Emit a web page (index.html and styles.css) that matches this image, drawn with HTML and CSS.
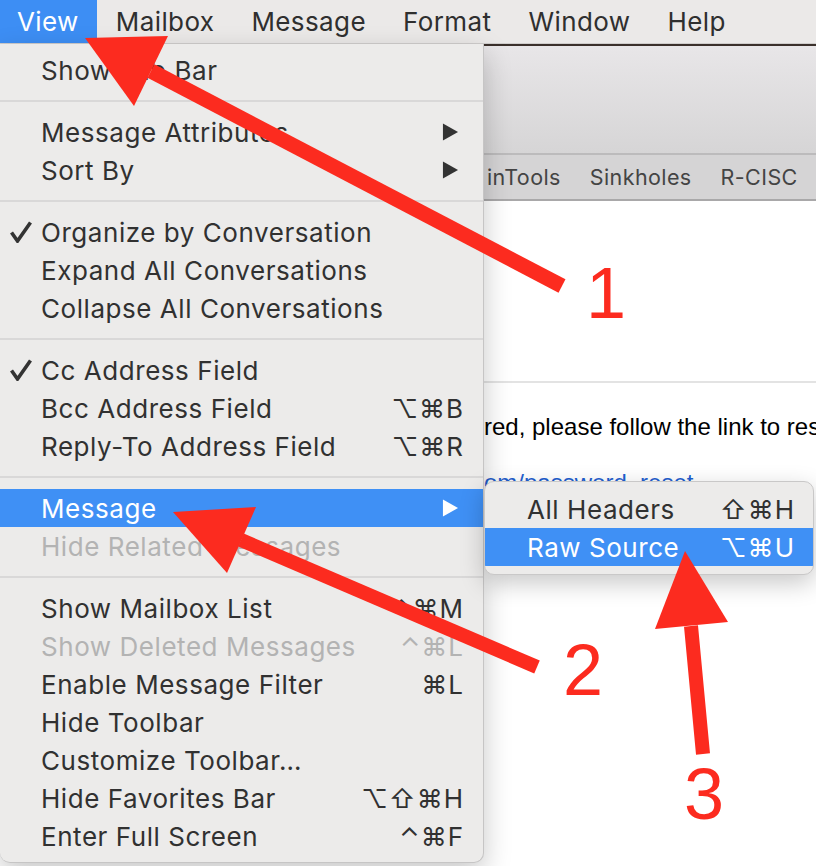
FILE: index.html
```html
<!DOCTYPE html>
<html lang="en">
<head>
<meta charset="utf-8">
<title>Mail – View menu</title>
<link rel="stylesheet" href="styles.css">
</head>
<body>
<div class="screen">
  <header class="menubar">
    <span class="mb-item active">View</span>
    <span class="mb-item">Mailbox</span>
    <span class="mb-item">Message</span>
    <span class="mb-item">Format</span>
    <span class="mb-item">Window</span>
    <span class="mb-item">Help</span>
  </header>

  <div class="desk">
    <div class="window">
      <div class="toolbar"></div>
      <div class="favbar">
        <span class="fav">inTools</span>
        <span class="fav">Sinkholes</span>
        <span class="fav">R-CISC</span>
      </div>
      <div class="content">
        <div class="msg-header"></div>
        <div class="msg-body">
          <p class="body-text">red, please follow the link to reset your password.</p>
          <p class="body-link">om/password_reset</p>
        </div>
      </div>
    </div>

    <div class="menu">
      <div class="mi"><span class="ck"></span><span class="lbl">Show Tab Bar</span><span class="sc"></span></div>
      <div class="sep"></div>
      <div class="mi"><span class="ck"></span><span class="lbl">Message Attributes</span><svg class="sub" viewBox="0 0 18 18"><path d="M1 0 L17 9 L1 18 Z"/></svg></div>
      <div class="mi"><span class="ck"></span><span class="lbl">Sort By</span><svg class="sub" viewBox="0 0 18 18"><path d="M1 0 L17 9 L1 18 Z"/></svg></div>
      <div class="sep"></div>
      <div class="mi"><span class="ck"><svg class="check" viewBox="0 0 22 22"><path d="M1.5 11.5 L7.5 20 L20.5 1.5"/></svg></span><span class="lbl">Organize by Conversation</span><span class="sc"></span></div>
      <div class="mi"><span class="ck"></span><span class="lbl">Expand All Conversations</span><span class="sc"></span></div>
      <div class="mi"><span class="ck"></span><span class="lbl">Collapse All Conversations</span><span class="sc"></span></div>
      <div class="sep"></div>
      <div class="mi"><span class="ck"><svg class="check" viewBox="0 0 22 22"><path d="M1.5 11.5 L7.5 20 L20.5 1.5"/></svg></span><span class="lbl">Cc Address Field</span><span class="sc"></span></div>
      <div class="mi"><span class="ck"></span><span class="lbl">Bcc Address Field</span><span class="sc">⌥⌘B</span></div>
      <div class="mi"><span class="ck"></span><span class="lbl">Reply-To Address Field</span><span class="sc">⌥⌘R</span></div>
      <div class="sep"></div>
      <div class="mi hl"><span class="ck"></span><span class="lbl">Message</span><svg class="sub" viewBox="0 0 18 18"><path d="M1 0 L17 9 L1 18 Z"/></svg></div>
      <div class="mi dis"><span class="ck"></span><span class="lbl">Hide Related Messages</span><span class="sc"></span></div>
      <div class="sep"></div>
      <div class="mi"><span class="ck"></span><span class="lbl">Show Mailbox List</span><span class="sc">⌃⌘M</span></div>
      <div class="mi dis"><span class="ck"></span><span class="lbl">Show Deleted Messages</span><span class="sc">⌃⌘L</span></div>
      <div class="mi"><span class="ck"></span><span class="lbl">Enable Message Filter</span><span class="sc">⌘L</span></div>
      <div class="mi"><span class="ck"></span><span class="lbl">Hide Toolbar</span><span class="sc"></span></div>
      <div class="mi"><span class="ck"></span><span class="lbl">Customize Toolbar…</span><span class="sc"></span></div>
      <div class="mi"><span class="ck"></span><span class="lbl">Hide Favorites Bar</span><span class="sc">⌥⇧⌘H</span></div>
      <div class="mi"><span class="ck"></span><span class="lbl">Enter Full Screen</span><span class="sc">⌃⌘F</span></div>
    </div>

    <div class="submenu">
      <div class="si"><span class="lbl">All Headers</span><span class="sc">⇧⌘H</span></div>
      <div class="si hl"><span class="lbl">Raw Source</span><span class="sc">⌥⌘U</span></div>
    </div>
  </div>

  <svg class="annot" viewBox="0 0 816 866" width="816" height="866">
    <g class="red">
      <line x1="151" y1="71" x2="562" y2="286" stroke-width="15"/>
      <polygon points="85,38 168,36 134,106"/>
      <line x1="241" y1="540" x2="537" y2="667" stroke-width="14"/>
      <polygon points="173,512 256,507 227,573"/>
      <line x1="691" y1="626" x2="703" y2="754" stroke-width="14"/>
      <polygon points="685,551 728,622 655,629"/>
    </g>
    <text class="num" x="586" y="318">1</text>
    <text class="num" x="563" y="695">2</text>
    <text class="num" x="684" y="819">3</text>
  </svg>
</div>
</body>
</html>
```

FILE: styles.css
```css
* { box-sizing: border-box; }
html, body { margin: 0; padding: 0; }
body {
  width: 816px;
  height: 866px;
  overflow: hidden;
  background: #ffffff;
  font-family: Inter, "Noto Sans", "DejaVu Sans", sans-serif;
}
.screen {
  position: relative;
  width: 816px;
  height: 866px;
  display: flex;
  flex-direction: column;
}

/* menu bar */
.menubar {
  flex: none;
  height: 44px;
  display: flex;
  align-items: stretch;
  background: #ebe9e8;
  border-bottom: 1px solid #cfcdcc;
  font-size: 26px;
  letter-spacing: 0.4px;
  color: #2f2f2f;
}
.mb-item {
  display: flex;
  align-items: center;
  padding: 0 18.5px;
}
.mb-item.active {
  background: #3d8ef4;
  color: #ffffff;
  padding-left: 17px;
}

/* app window behind */
.desk {
  position: relative;
  flex: 1;
}
.window {
  height: 100%;
  display: flex;
  flex-direction: column;
  border-top: 2px solid #3a302b;
}
.toolbar {
  flex: none;
  height: 109px;
  background: linear-gradient(#e8e6e8, #d6d5d6);
  border-bottom: 2px solid #bcbbbc;
}
.favbar {
  flex: none;
  height: 46px;
  display: flex;
  align-items: center;
  gap: 29px;
  padding-left: 487px;
  background: #d5d4d5;
  border-bottom: 2px solid #a9a8a9;
  font-size: 21.5px;
  letter-spacing: 0.4px;
  color: #444444;
  white-space: nowrap;
}
.content {
  flex: 1;
  background: #ffffff;
}
.msg-header {
  height: 182px;
  border-bottom: 2px solid #e3e3e3;
}
.msg-body {
  padding: 29px 0 0 484px;
  font-family: "Liberation Sans", Arial, sans-serif;
  font-size: 24px;
  line-height: 30px;
  white-space: nowrap;
  overflow: hidden;
}
.msg-body p { margin: 0; }
.body-text { color: #000000; }
.body-link { margin-top: 26px !important; color: #1f5fd0; }

/* dropdown menu */
.menu {
  position: absolute;
  left: 0;
  top: 0;
  width: 484px;
  padding: 7px 0;
  background: #ecebea;
  border-right: 1px solid #c6c5c5;
  border-bottom: 1px solid #c6c5c5;
  border-radius: 0 0 10px 10px;
  box-shadow: 0 10px 28px rgba(0, 0, 0, 0.22);
  font-size: 26px;
  letter-spacing: 0.55px;
  color: #313131;
  z-index: 2;
}
.mi {
  height: 38px;
  display: grid;
  grid-template-columns: 41px 1fr auto;
  align-items: center;
  padding-right: 19px;
  white-space: nowrap;
}
.mi.hl { background: #3f90f5; color: #ffffff; }
.mi.dis { color: #b3b3b3; }
.ck {
  display: flex;
  align-items: center;
  padding-left: 10px;
}
.check {
  width: 22px;
  height: 22px;
  fill: none;
  stroke: #333333;
  stroke-width: 3.6;
  stroke-linejoin: miter;
}
.sc {
  font-family: Inter, "DejaVu Sans", sans-serif;
  letter-spacing: 1px;
}
.sub {
  width: 17px;
  height: 18px;
  margin-right: 5px;
  fill: #333333;
}
.mi.hl .sub { fill: #ffffff; }
.sep {
  height: 24px;
  display: flex;
  align-items: center;
}
.sep::after {
  content: "";
  flex: 1;
  height: 2px;
  background: #d9d8d8;
}

/* submenu */
.submenu {
  position: absolute;
  left: 484px;
  top: 437px;
  width: 330px;
  padding: 8px 0;
  background: #ecebea;
  border: 1px solid #c9c8c8;
  border-radius: 10px;
  box-shadow: 0 8px 24px rgba(0, 0, 0, 0.22);
  font-size: 26px;
  letter-spacing: 0.55px;
  color: #313131;
  z-index: 3;
  overflow: hidden;
}
.si {
  height: 38px;
  display: flex;
  align-items: center;
  justify-content: space-between;
  padding: 0 18px 0 42px;
  white-space: nowrap;
}
.si.hl { background: #3f90f5; color: #ffffff; }

/* annotations */
.annot {
  position: absolute;
  left: 0;
  top: 0;
  z-index: 5;
  pointer-events: none;
}
.red line { stroke: #fc2b1f; stroke-linecap: butt; }
.red polygon { fill: #fc2b1f; }
.num {
  font-family: "Liberation Sans", Arial, sans-serif;
  font-size: 72px;
  fill: #fc2b1f;
}
```
